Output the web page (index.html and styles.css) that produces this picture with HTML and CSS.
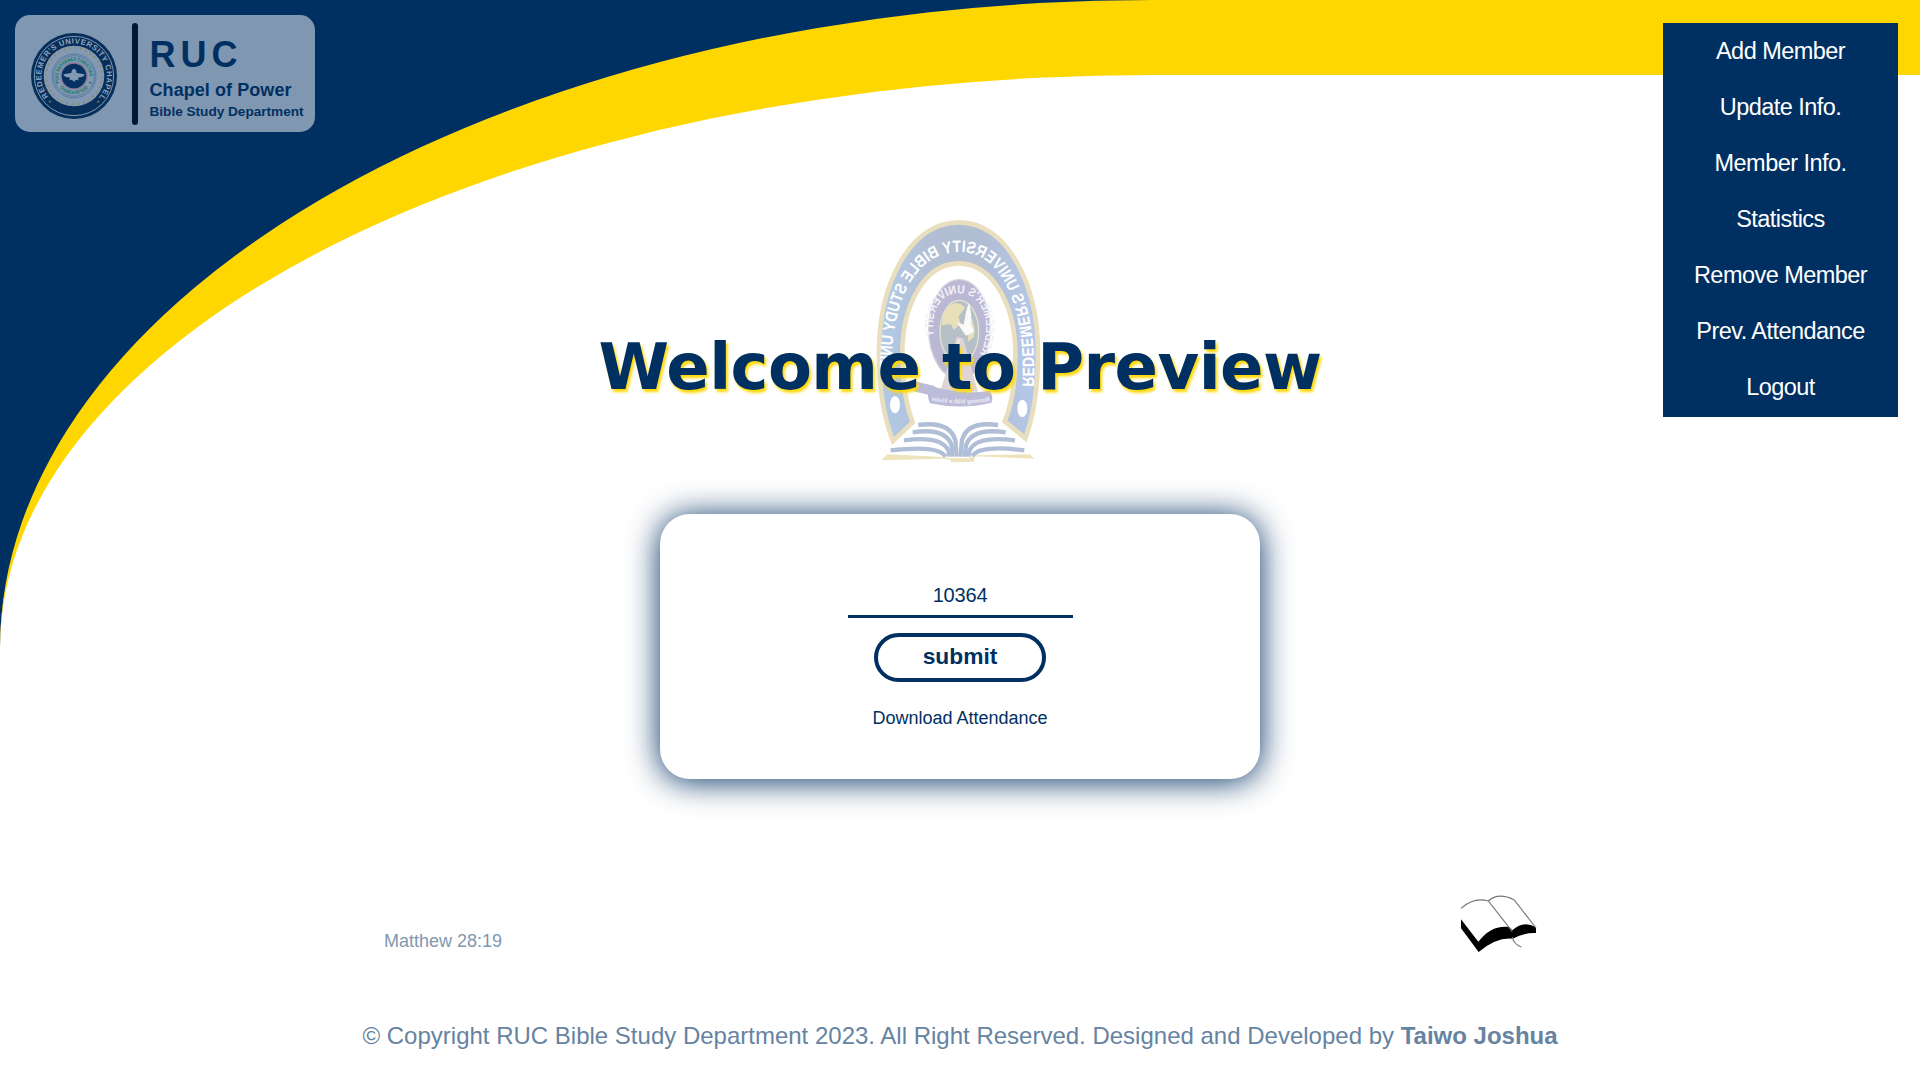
FILE: index.html
```html
<!DOCTYPE html>
<html lang="en">
<head>
<meta charset="utf-8">
<title>Preview</title>
<link rel="stylesheet" href="styles.css">
</head>
<body>
<div class="page">
  <header class="brand">
    <svg class="seal" viewBox="0 0 258 258">
      <defs>
        <path id="sealRing" d="M58,197 A98,98 0 1 1 200,197"/>
        <path id="sealTop" d="M85,143 A46,46 0 1 1 173,143"/>
        <path id="sealBottom" d="M78,151 A56,56 0 0 0 180,151"/>
      </defs>
      <circle class="navy" cx="129" cy="129" r="129"/>
      <circle class="ring" cx="129" cy="129" r="119"/>
      <circle class="plate" cx="129" cy="129" r="91"/>
      <circle class="stars" cx="129" cy="129" r="84"/>
      <circle class="thin" cx="129" cy="129" r="66"/>
      <circle class="thin" cx="129" cy="129" r="61"/>
      <circle class="core" cx="129" cy="129" r="39"/>
      <path class="plate" d="M97,124 L121,120 Q123,107 129,108 Q135,107 137,120 L161,124 Q158,134 141,134 L143,142 L135,140 L129,146 L123,140 L115,142 L117,134 Q100,134 97,124Z"/>
      <text class="seal-text"><textPath href="#sealRing" startOffset="8" textLength="444">REDEEMER'S UNIVERSITY CHAPEL</textPath></text>
      <text class="seal-green"><textPath href="#sealTop" textLength="158" lengthAdjust="spacingAndGlyphs">THE REDEEMED CHRISTIAN</textPath></text>
      <text class="seal-green"><textPath href="#sealBottom" startOffset="16" textLength="96" lengthAdjust="spacingAndGlyphs">CHURCH OF GOD</textPath></text>
      <text class="seal-star" x="73" y="153">★</text>
      <text class="seal-star" x="172" y="153">★</text>
      <text class="seal-gold" x="51" y="210">★</text>
      <text class="seal-gold" x="196" y="210">★</text>
    </svg>
    <div class="brand-bar"></div>
    <div class="brand-name">
      <div class="brand-ruc">RUC</div>
      <div class="brand-chapel">Chapel of Power</div>
      <div class="brand-dept">Bible Study Department</div>
    </div>
  </header>

  <main class="content">
    <div class="hero">
      <svg class="emblem" viewBox="0 0 600 780">
        <defs>
          <linearGradient id="arch" x1="0" x2="1"><stop offset="0" stop-color="#b1cae8"/><stop offset=".35" stop-color="#b1bed3"/><stop offset=".65" stop-color="#b0bdd3"/><stop offset="1" stop-color="#b5c9ec"/></linearGradient>
          <path id="archText" d="M109,530 C98,300 165,126 299,126 C440,126 520,300 498,560"/>
          <path id="crestText" d="M237,432 C201,370 212,250 299,250 C386,250 391,370 357,440"/>
          <path id="bannerText" d="M205,572 Q300,590 390,570"/>
        </defs>
        <path class="arch" d="M99,693 C70,620 57,520 57,430 C57,220 150,37 297,37 C440,37 534,220 534,430 C534,530 520,620 496,685 L434,634 C458,580 466,500 466,430 C466,290 400,160 297,160 C190,160 127,290 127,430 C127,520 140,590 158,637 Z"/>
        <ellipse class="crest" cx="298" cy="358" rx="92" ry="149"/>
        <ellipse class="crest-core" cx="298" cy="365" rx="58" ry="94"/>
        <path class="crest-land" d="M246,346 Q247,292 282,280 Q302,278 315,293 L295,320 L302,340 L282,360 L272,342Z M330,318 Q350,350 341,382 L323,396Z"/>
        <path class="dove" d="M326,278 Q337,310 333,342 L342,366 L318,377 L304,357 L290,337 L311,344 L318,307Z"/>
        <path class="tower" d="M291,380 L252,507 L240,545 L354,545 L330,460 L309,385Z"/>
        <path class="tower-line" d="M295,388 L300,545 M274,430 L314,528"/>
        <path class="banner" d="M158,512 L224,528 L218,557 L160,544 L176,529Z M208,526 Q298,557 389,542 Q402,560 394,578 Q300,600 210,580 Q198,556 208,526Z"/>
        <g transform="translate(596 0) scale(-1 1)">
          <text class="arch-label"><textPath href="#archText" textLength="942" lengthAdjust="spacingAndGlyphs">REDEEMER'S UNIVERSITY BIBLE STUDY UNIT</textPath></text>
          <text class="crest-label"><textPath href="#crestText" textLength="400" lengthAdjust="spacingAndGlyphs">REDEEMER'S UNIVERSITY</textPath></text>
          <text class="banner-label"><textPath href="#bannerText" textLength="178">Running With a Vision</textPath></text>
        </g>
        <ellipse class="dot" cx="105" cy="584" rx="15" ry="26"/>
        <ellipse class="dot" cx="487" cy="595" rx="15" ry="26"/>
        <path class="book-base" d="M82,733 L250,741 L270,745 L325,745 L345,736 L510,733 L523,746 L345,739 L342,755 L275,757 L270,749 L248,746 L64,751Z"/>
        <g class="leaf">
          <path d="M175,645 Q268,632 286,690 L290,740"/><path d="M158,667 Q257,652 275,706 L277,740"/><path d="M132,691 Q246,676 266,723 L267,740"/><path d="M92,721 Q235,704 257,740"/>
          <path d="M414,645 Q322,632 306,690 L301,740"/><path d="M437,667 Q335,652 318,706 L314,740"/><path d="M465,691 Q347,676 328,723 L325,740"/><path d="M493,721 Q360,704 337,738"/>
        </g>
      </svg>
      <h1 class="title">Welcome to Preview</h1>
    </div>
    <form class="card">
      <input class="code" type="text" value="10364">
      <button class="submit" type="button">submit</button>
      <a class="download">Download Attendance</a>
    </form>
  </main>

  <nav class="menu">
    <a>Add Member</a>
    <a>Update Info.</a>
    <a>Member Info.</a>
    <a>Statistics</a>
    <a>Remove Member</a>
    <a>Prev. Attendance</a>
    <a>Logout</a>
  </nav>

  <div class="verse">
    <span>Matthew 28:19</span>
    <svg class="book" viewBox="0 0 225 171">
      <path d="M0,73 L52,140 Q92,88 145,96 L154,106 Q187,74 225,97 L225,114 Q190,112 155,131 Q106,126 53,171 L0,100Z"/>
      <path class="book-line" d="M0,40 Q39,6 82,18 L154,110 M82,18 Q111,-9 159,14 L225,99 M154,126 Q158,148 181,156"/>
    </svg>
  </div>
  <footer class="footer">© Copyright RUC Bible Study Department 2023. All Right Reserved. Designed and Developed by <b>Taiwo Joshua</b></footer>
</div>
</body>
</html>
```
FILE: styles.css
```css
* { box-sizing: border-box; }
body {
  margin: 0;
  background: #003062;
  font-family: "Liberation Sans", Arial, sans-serif;
  color: #003062;
}
.page {
  height: 1080px;
  background: #fff;
  border-top: 75px solid #ffd700;
  border-top-left-radius: 60%;
  display: grid;
  grid-template-columns: 340px 1fr 340px;
  grid-template-rows: 800px 101px 104px;
}
.brand {
  margin: -60px 0 0 15px;
  width: 300px;
  height: 117px;
  border-radius: 15px;
  background: #8097b1;
  display: flex;
  align-items: flex-start;
  padding: 8px 0 0 16px;
}
.seal { width: 86px; height: 86px; margin-top: 10px; overflow: visible; }
.navy { fill: #062f5b; }
.ring { fill: none; stroke: #8097b1; stroke-width: 3; }
.plate { fill: #8499b2; }
.stars { fill: none; stroke: #8b8c66; stroke-width: 6; stroke-dasharray: 5 11.5; }
.thin { fill: none; stroke: #416b98; stroke-width: 2; }
.core { fill: #063263; stroke: #8b7897; stroke-width: 4; }
.seal-text { fill: #91a6bd; font-size: 23px; font-weight: bold; }
.seal-green { fill: #087766; font-size: 15px; font-weight: bold; }
.seal-star { fill: #087766; font-size: 13px; font-family: "DejaVu Sans", sans-serif; }
.seal-gold { fill: #85845c; font-size: 12px; font-family: "DejaVu Sans", sans-serif; }
.brand-bar { width: 6px; height: 102px; margin-left: 15px; border-radius: 3px; background: #001831; }
.brand-name { margin-left: 11.5px; font-weight: bold; white-space: nowrap; }
.brand-ruc { font-size: 36px; line-height: 42px; letter-spacing: 5px; margin-top: 11px; }
.brand-chapel { font-size: 18px; line-height: 22px; letter-spacing: 0.07px; margin-top: 3px; }
.brand-dept { font-size: 13.6px; line-height: 20px; margin-top: 1px; }

.content { display: flex; flex-direction: column; align-items: center; }
.hero { position: relative; width: 730px; height: 439px; padding-top: 252px; text-align: center; }
.emblem { position: absolute; left: 265px; top: 135px; width: 200px; height: 260px; }
.arch { fill: url(#arch); stroke: #e9dfbe; stroke-width: 14; }
.arch-label { fill: #fff; font-size: 50px; font-weight: bold; }
.crest { fill: #bbb8d4; stroke: #d5d0dd; stroke-width: 4; }
.crest-core { fill: #b5c1c7; stroke: #e7e2d0; stroke-width: 4; }
.crest-land { fill: #e9dfb9; }
.crest-label { fill: #f3f1fa; font-size: 36px; font-weight: bold; }
.dove { fill: #fafafa; }
.tower { fill: #dfd5d9; }
.tower-line { fill: none; stroke: #eee8d4; stroke-width: 9; }
.banner { fill: #bcbbd8; }
.banner-label { fill: #eeeef8; font: bold italic 20px "Liberation Serif", serif; }
.dot { fill: #fff; }
.book-base { fill: #eee3bd; }
.leaf path { fill: none; stroke: #b0bfd7; stroke-width: 13; }
.title {
  position: relative;
  margin: 0;
  font: bold 64px/80px "DejaVu Sans", sans-serif;
  letter-spacing: -0.55px;
  white-space: nowrap;
  text-shadow: 2px 3px 3px #ffd700;
}
.card {
  width: 600px;
  height: 265px;
  background: #fff;
  border-radius: 30px;
  box-shadow: 0 2px 33px #003062;
  display: flex;
  flex-direction: column;
  align-items: center;
  padding-top: 59px;
}
.code {
  width: 225px;
  height: 45px;
  padding: 3px 0 0;
  border: 0;
  border-bottom: 3px solid #003062;
  background: none;
  font: 20px "Liberation Sans", Arial, sans-serif;
  letter-spacing: -0.2px;
  color: inherit;
  text-align: center;
}
.submit {
  width: 172px;
  height: 49px;
  margin-top: 15px;
  padding: 0 0 3px;
  border: 4px solid #003062;
  border-radius: 25px;
  background: none;
  color: inherit;
  font: bold 22.8px "Liberation Sans", Arial, sans-serif;
}
.download { margin-top: 26px; font-size: 18px; line-height: 20px; }

.menu {
  justify-self: end;
  width: 235px;
  height: 394px;
  margin: -52px 22px 0 0;
  background: #003062;
  color: #fff;
  text-align: center;
}
.menu a { display: block; height: 56px; line-height: 57px; font-size: 23.5px; letter-spacing: -0.55px; }

.verse { grid-column: 1 / -1; display: flex; justify-content: space-between; padding: 20px 384px 0; color: #8097b1; font-size: 18px; }
.verse span { margin-top: 36px; }
.book { width: 75px; height: 57px; overflow: visible; }
.book-line { fill: none; stroke: #777; stroke-width: 3.5; }
.footer { grid-column: 1 / -1; text-align: center; font-size: 24px; line-height: 28px; padding-top: 46px; color: #6683a1; }
```
